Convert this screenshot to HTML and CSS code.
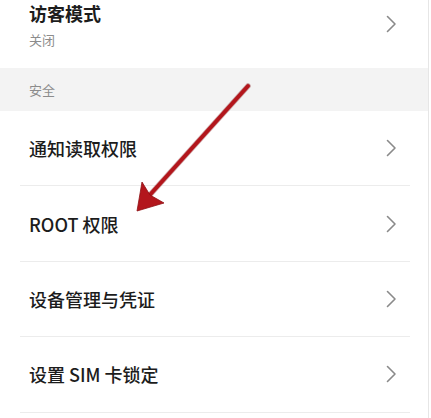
FILE: index.html
```html
<!DOCTYPE html>
<html lang="zh-CN">
<head>
<meta charset="utf-8">
<link rel="stylesheet" href="styles.css">
</head>
<body>
<div class="page">
  <div class="group">
    <div class="item top">
      <div class="texts">
        <div class="title strong">访客模式</div>
        <div class="sub">关闭</div>
      </div>
      <svg class="chev" width="11" height="18" viewBox="0 0 11 18"><path d="M1.5 1.5 L9 9 L1.5 16.5" fill="none" stroke="#8a8a8a" stroke-width="1.6" stroke-linecap="round" stroke-linejoin="round"/></svg>
    </div>
  </div>
  <div class="section">安全</div>
  <div class="group">
    <div class="item row">
      <div class="title">通知读取权限</div>
      <svg class="chev" width="11" height="18" viewBox="0 0 11 18"><path d="M1.5 1.5 L9 9 L1.5 16.5" fill="none" stroke="#8a8a8a" stroke-width="1.6" stroke-linecap="round" stroke-linejoin="round"/></svg>
    </div>
    <div class="item row">
      <div class="title">ROOT 权限</div>
      <svg class="chev" width="11" height="18" viewBox="0 0 11 18"><path d="M1.5 1.5 L9 9 L1.5 16.5" fill="none" stroke="#8a8a8a" stroke-width="1.6" stroke-linecap="round" stroke-linejoin="round"/></svg>
    </div>
    <div class="item row">
      <div class="title">设备管理与凭证</div>
      <svg class="chev" width="11" height="18" viewBox="0 0 11 18"><path d="M1.5 1.5 L9 9 L1.5 16.5" fill="none" stroke="#8a8a8a" stroke-width="1.6" stroke-linecap="round" stroke-linejoin="round"/></svg>
    </div>
    <div class="item row">
      <div class="title">设置 SIM 卡锁定</div>
      <svg class="chev" width="11" height="18" viewBox="0 0 11 18"><path d="M1.5 1.5 L9 9 L1.5 16.5" fill="none" stroke="#8a8a8a" stroke-width="1.6" stroke-linecap="round" stroke-linejoin="round"/></svg>
    </div>
  </div>
  <svg class="arrow" width="431" height="418" viewBox="0 0 431 418">
    <line x1="248" y1="86" x2="148" y2="197" stroke="#7a0d10" stroke-width="5.5" stroke-linecap="round" opacity="0.35"/>
    <line x1="248" y1="86" x2="148" y2="197" stroke="#b3161c" stroke-width="4" stroke-linecap="round"/>
    <polygon points="137,211 142,182 150,195 164,203" fill="#b3161c" stroke="#8e1014" stroke-width="0.8" stroke-linejoin="round"/>
  </svg>
</div>
</body>
</html>
```

FILE: styles.css
```css
html, body {
  margin: 0;
  padding: 0;
  background: #ffffff;
}

body {
  font-family: "Noto Sans CJK SC", "Noto Sans", sans-serif;
  color: #1c1c1c;
}

.page {
  position: relative;
  width: 428px;
  height: 418px;
  overflow: hidden;
  border-right: 1px solid #e6e6e6;
  background: #ffffff;
}

.group {
  margin: 0 18px 0 20px;
}

.item {
  display: flex;
  align-items: center;
  justify-content: space-between;
  padding: 0 13px 0 9px;
  box-sizing: border-box;
}

.top {
  height: 68px;
  align-items: flex-start;
}

.top .chev {
  margin-top: 15px;
}

.title {
  font-size: 18px;
  line-height: 26px;
  font-weight: 500;
  letter-spacing: 0;
}

.title.strong {
  font-weight: 700;
}

.sub {
  font-size: 13px;
  line-height: 28px;
  color: #8c8c8c;
}

.section {
  height: 43px;
  line-height: 43px;
  padding-left: 29px;
  background: #f3f3f3;
  font-size: 13px;
  color: #8c8c8c;
}

.row {
  height: 75.4px;
  border-bottom: 1px solid #ececec;
}

.chev {
  display: block;
  flex: none;
}

.arrow {
  position: absolute;
  left: 0;
  top: 0;
  pointer-events: none;
}
```
